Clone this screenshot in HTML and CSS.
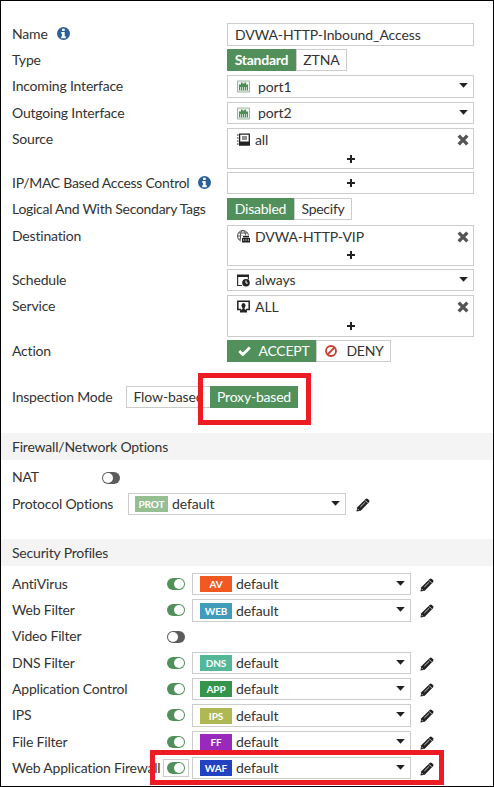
FILE: index.html
```
<!DOCTYPE html>
<html lang="en">
<head>
<meta charset="utf-8">
<title>Firewall Policy</title>
<link rel="stylesheet" href="styles.css">
</head>
<body>
<svg width="0" height="0" class="defs">
  <symbol id="info" viewBox="0 0 12 12"><circle cx="6" cy="6" r="6" fill="#2c6098"/><path d="M4.700 1.600h2.400v2.100H4.700zM3.900 4.600h3.200v4h1V10.300H3.900V8.600h.8V6.200h-.8z" fill="#fff"/></symbol>
  <symbol id="caret" viewBox="0 0 9 5"><path d="M.2 0h8.600L4.500 4.800z" fill="#222"/></symbol>
  <symbol id="plus" viewBox="0 0 8 8"><path d="M3 0h2v3h3v2H5v3H3V5H0V3h3z" fill="#222"/></symbol>
  <symbol id="close" viewBox="0 0 10 10"><path d="M1.400 1.400l7.200 7.200M8.600 1.400L1.400 8.600" stroke="#555" stroke-width="2.800"/></symbol>
  <symbol id="pencil" viewBox="0 0 13 13"><path d="M.4 12.600L1.200 8.600 9 1Q10 .1 11 1L12.200 2.200Q12.900 3 12 4L4.400 11.800z" fill="#222"/><path d="M4 8.400L8.600 3.900M8.600 2.300l2.200 2.200M1.600 10.300l1.100 1.100" stroke="#fff" stroke-width=".7" fill="none"/></symbol>
  <symbol id="port" viewBox="0 0 13 12"><path d="M.5.5h12v11H.5z" fill="#eef5ee" stroke="#9cb79e"/><path d="M2 10V4h2V2h1.500v1h2V2H9v2h2v6z" fill="#4a8d55"/><path d="M3.500 6.500V10M5.500 6.500V10M7.500 6.500V10M9.500 6.500V10" stroke="#e4f0e5" stroke-width=".8"/></symbol>
  <symbol id="book" viewBox="0 0 13 12"><path d="M2.600.7h9.700v10.600H2.600z" fill="#fff" stroke="#222" stroke-width="1.300"/><path d="M2 8h11v4H2zM5 3h5v1H5zM5 5h5v1H5zM0 1h1.500v1H0zM0 4h1.500v1H0zM0 7h1.500v1H0zM0 10h1.500v1H0z" fill="#222"/></symbol>
  <symbol id="globe" viewBox="0 0 13 13"><g fill="none" stroke="#444" stroke-width=".9"><circle cx="6" cy="6" r="5.500"/><ellipse cx="6" cy="6" rx="2.600" ry="5.500"/><path d="M.5 6h11M1.400 3h9.200M1.400 9h9.200"/></g><path d="M4 5.500h9V13H4z" fill="#fff"/><path d="M5 8h8v4.500H5zM6 6h6v1.500H6z" fill="#222"/><path d="M6 10h1.200M8.400 10h1.200M10.800 10H12" stroke="#fff"/></symbol>
  <symbol id="sched" viewBox="0 0 13 12"><path d="M.6 1v10H5M11.400 1v4" fill="none" stroke="#333" stroke-width="1.200"/><path d="M0 0h12v2.500H0z" fill="#222"/><circle cx="9" cy="8.200" r="3.800" fill="#222"/><path d="M9 6v2.600h1.800" fill="none" stroke="#fff"/></symbol>
  <symbol id="serv" viewBox="0 0 13 12"><path d="M4 9H.8V.8h11.400V9H9" fill="none" stroke="#222" stroke-width="1.500"/><ellipse cx="6.500" cy="5" rx="2" ry="2.500" fill="#222"/><path d="M5.500 6h2v2.500L10 10v2H3v-2l2.500-1.500z" fill="#222"/></symbol>
  <symbol id="check" viewBox="0 0 13 10"><path d="M1.200 5l3.600 3.500L11.800 1.500" fill="none" stroke="#fff" stroke-width="2.800"/></symbol>
  <symbol id="deny" viewBox="0 0 12 12"><circle cx="6" cy="6" r="5" fill="none" stroke="#c6402f" stroke-width="1.800"/><path d="M9.500 2.500l-7 7" stroke="#c6402f" stroke-width="1.800"/></symbol>
</svg>

<main class="page">
  <div class="policy">
    <div class="label">Name <svg class="info"><use href="#info"/></svg></div>
    <div class="field tall name">DVWA-HTTP-Inbound_Access</div>

    <div class="label">Type</div>
    <div class="toggle"><span class="opt on type-on">Standard</span><span class="opt type-off">ZTNA</span></div>

    <div class="label">Incoming Interface</div>
    <div class="field tall port"><svg class="ico"><use href="#port"/></svg>port1<svg class="caret"><use href="#caret"/></svg></div>

    <div class="label">Outgoing Interface</div>
    <div class="field port"><svg class="ico"><use href="#port"/></svg>port2<svg class="caret"><use href="#caret"/></svg></div>

    <div class="label">Source</div>
    <div class="multi"><div class="entry"><svg class="ico"><use href="#book"/></svg>all<svg class="close"><use href="#close"/></svg></div><svg class="plus"><use href="#plus"/></svg></div>

    <div class="label snug">IP/MAC Based Access Control <svg class="info"><use href="#info"/></svg></div>
    <div class="field empty"><svg class="plus"><use href="#plus"/></svg></div>

    <div class="label snug">Logical And With Secondary Tags</div>
    <div class="toggle"><span class="opt on tags-on">Disabled</span><span class="opt tags-off">Specify</span></div>

    <div class="label">Destination</div>
    <div class="multi destination"><div class="entry"><svg class="ico"><use href="#globe"/></svg>DVWA-HTTP-VIP<svg class="close"><use href="#close"/></svg></div><svg class="plus"><use href="#plus"/></svg></div>

    <div class="label">Schedule</div>
    <div class="field"><svg class="ico"><use href="#sched"/></svg>always<svg class="caret"><use href="#caret"/></svg></div>

    <div class="label">Service</div>
    <div class="multi service"><div class="entry"><svg class="ico"><use href="#serv"/></svg>ALL<svg class="close"><use href="#close"/></svg></div><svg class="plus"><use href="#plus"/></svg></div>

    <div class="label">Action</div>
    <div class="toggle"><span class="opt on accept"><svg class="check"><use href="#check"/></svg>ACCEPT</span><span class="opt deny"><svg class="ban"><use href="#deny"/></svg>DENY</span></div>
  </div>

  <div class="inspection">
    <div class="label">Inspection Mode</div>
    <div class="toggle"><span class="opt flow">Flow-based</span><span class="opt on proxy">Proxy-based</span></div>
  </div>

  <h2 class="section">Firewall/Network Options</h2>
  <div class="network">
    <div class="net-row nat"><div class="label">NAT</div><span class="switch"></span></div>
    <div class="net-row"><div class="label proto">Protocol Options</div><div class="field profile wide"><span class="badge prot">PROT</span>default<svg class="caret"><use href="#caret"/></svg></div><svg class="pencil"><use href="#pencil"/></svg></div>
  </div>

  <h2 class="section">Security Profiles</h2>
  <div class="profiles">
    <div class="label">AntiVirus</div><span class="switch active"></span>
    <div class="field profile"><span class="badge av">AV</span>default<svg class="caret"><use href="#caret"/></svg></div><svg class="pencil"><use href="#pencil"/></svg>

    <div class="label">Web Filter</div><span class="switch active"></span>
    <div class="field profile tall"><span class="badge web">WEB</span>default<svg class="caret"><use href="#caret"/></svg></div><svg class="pencil"><use href="#pencil"/></svg>

    <div class="label video">Video Filter</div><span class="switch"></span><span></span><span></span>

    <div class="label">DNS Filter</div><span class="switch active"></span>
    <div class="field profile"><span class="badge dns">DNS</span>default<svg class="caret"><use href="#caret"/></svg></div><svg class="pencil"><use href="#pencil"/></svg>

    <div class="label">Application Control</div><span class="switch active"></span>
    <div class="field profile"><span class="badge app">APP</span>default<svg class="caret"><use href="#caret"/></svg></div><svg class="pencil"><use href="#pencil"/></svg>

    <div class="label">IPS</div><span class="switch active"></span>
    <div class="field profile tall"><span class="badge ips">IPS</span>default<svg class="caret"><use href="#caret"/></svg></div><svg class="pencil"><use href="#pencil"/></svg>

    <div class="label">File Filter</div><span class="switch active"></span>
    <div class="field profile"><span class="badge ff">FF</span>default<svg class="caret"><use href="#caret"/></svg></div><svg class="pencil"><use href="#pencil"/></svg>

    <div class="label">Web Application Firewall</div><span class="switch active focused"></span>
    <div class="field profile"><span class="badge waf">WAF</span>default<svg class="caret"><use href="#caret"/></svg></div><svg class="pencil"><use href="#pencil"/></svg>
  </div>

  <div class="callout callout-proxy"></div>
  <div class="callout callout-waf"></div>
</main>
</body>
</html>
```
FILE: styles.css
```
* { box-sizing: border-box; }
body { margin: 0; font: 14px/22px Lato, "Liberation Sans", sans-serif; letter-spacing: -0.1px; color: #333; background: #fff; }
.defs { position: absolute; }
svg { flex: none; display: block; }

.page { position: relative; width: 494px; height: 787px; border: 1px solid #000; padding-top: 22px; overflow: hidden; }

.policy {
  display: grid;
  grid-template-columns: 215px 247px;
  grid-template-rows: 26px 26px 27px 26px 44px 26px 27px 44px 26px 45px 22px;
  align-items: start;
  margin-left: 11px;
}

.label { display: flex; height: 22px; letter-spacing: -0.19px; white-space: nowrap; }
.snug { letter-spacing: -0.28px; }
.info { width: 13px; height: 13px; margin: 4px 0 0 9px; }

.field { display: flex; align-items: center; height: 22px; border: 1px solid #ccc; padding: 0 5px 0 9px; line-height: 20px; background: #fff; }
.tall { height: 23px; }
.name { padding-left: 7px; }
.ico { width: 13px; height: 13px; margin-right: 5px; }
.port .ico { margin-right: 8px; }
.caret { width: 9px; height: 5px; margin-left: auto; transform: translateY(-1px); }

.multi { height: 41px; border: 1px solid #ccc; padding: 0 4px 0 9px; }
.service { height: 42px; }
.entry { display: flex; align-items: center; height: 21px; }
.close { width: 12px; height: 12px; margin-left: auto; }
.plus { width: 8px; height: 8px; margin: 5px auto 0; }
.multi .plus { transform: translateX(-2px); }
.destination .plus { margin-top: 4px; }
.empty .plus { margin: 0 auto; transform: translateX(-2px); }

.toggle { display: flex; }
.opt { display: flex; align-items: center; justify-content: center; height: 22px; border: 1px solid #ccc; line-height: 20px; background: #fff; }
.on { background: #52905b; border-color: #52905b; color: #fff; }
.type-on { width: 69px; font-weight: 700; letter-spacing: -0.25px; }
.type-off { width: 51px; }
.tags-on { width: 67px; letter-spacing: -0.25px; }
.tags-off { width: 58px; letter-spacing: -0.25px; }
.accept { width: 89px; padding-left: 4px; letter-spacing: -0.25px; }
.deny { width: 75px; padding-left: 2px; letter-spacing: -0.25px; }
.check { width: 13px; height: 10px; margin-right: 8px; }
.ban { width: 12px; height: 12px; margin-right: 9px; }
.flow { width: 84px; border-right: 0; }
.proxy { width: 88px; letter-spacing: -0.2px; }

.inspection { display: grid; grid-template-columns: 114px auto; margin: 24px 0 25px 11px; }

.section { margin: 0; height: 27px; padding-left: 11px; background: #f4f4f4; font-size: 14px; font-weight: 400; line-height: 27px; letter-spacing: -0.19px; }

.network { height: 79px; padding: 6px 0 0 11px; }
.net-row { display: flex; }
.nat { height: 27px; }
.nat .label { width: 90px; }
.nat .switch { margin-top: 6px; }
.proto { width: 116px; }
.wide { width: 218px; }
.network .pencil { margin-left: 10px; }

.switch { display: block; position: relative; width: 18px; height: 12px; border-radius: 6px; background: #5c5c5c; }
.switch::after { content: ""; position: absolute; left: 1px; top: 1px; width: 10px; height: 10px; border-radius: 50%; background: #fff; }
.active { background: #52905b; }
.active::after { left: 7px; }
.focused::before { content: ""; position: absolute; inset: -3px -4px; border: 1px solid #ccc; }

.profile { padding: 0 5px 0 7px; }
.badge { width: 32px; height: 16px; margin-right: 4px; color: #fff; font-size: 10px; font-weight: 700; line-height: 16px; text-align: center; }
.prot { width: 33px; margin-left: -1px; background: #95bf93; }
.av { background: #f25822; }
.web { background: #409cba; }
.dns { background: #54b797; }
.app { background: #35954b; }
.ips { background: #afb954; }
.ff { background: #9929bd; }
.waf { background: #2342c1; }
.pencil { width: 14px; height: 14px; margin-top: 5px; }

.profiles {
  display: grid;
  grid-template-columns: 155px 25px 219px 24px;
  grid-template-rows: 26px 27px 26px 26px 26px 27px 26px 22px;
  align-items: start;
  margin: 7px 0 0 11px;
}
.profiles .switch { margin-top: 5px; }
.profiles .pencil { margin-left: 9px; }
.video { margin-top: -1px; }

.callout { position: absolute; border: 5px solid #ed1c24; }
.callout-proxy { left: 197px; top: 372px; width: 113px; height: 52px; }
.callout-waf { left: 149px; top: 749px; width: 294px; height: 35px; }
```
